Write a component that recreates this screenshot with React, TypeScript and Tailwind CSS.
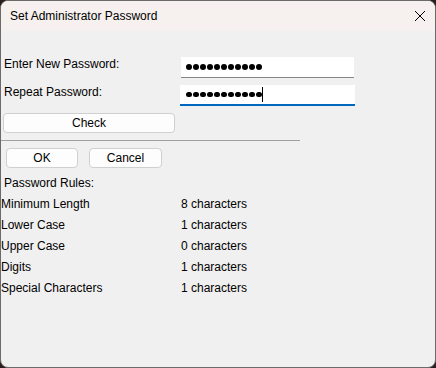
import React from "react";

function Dots({ n }: { n: number }) {
  return (
    <div className="flex items-center gap-[1.5px]">
      {Array.from({ length: n }).map((_, i) => (
        <span key={i} className="block w-[5.5px] h-[5.5px] rounded-full bg-black" />
      ))}
    </div>
  );
}

const rules: [string, string][] = [
  ["Minimum Length", "8 characters"],
  ["Lower Case", "1 characters"],
  ["Upper Case", "0 characters"],
  ["Digits", "1 characters"],
  ["Special Characters", "1 characters"],
];

export default function App() {
  return (
    <div
      className="w-[436px] h-[368px] bg-[#2a1f1c] text-black text-[12px]"
      style={{ fontFamily: '"Liberation Sans", Arial, sans-serif' }}
    >
      <div className="w-full h-full rounded-[8px] overflow-hidden border border-[#6b6b6b] bg-[#f0f0f0] flex flex-col">
        <div className="h-[30px] bg-[#f6f1ef] flex items-center justify-between pl-[9px] pr-[9px] shrink-0">
          <span className="text-[12px] leading-[14px]">Set Administrator Password</span>
          <svg width="12" height="12" viewBox="0 0 12 12">
            <path d="M1 1 L11 11 M11 1 L1 11" stroke="#000" strokeWidth="1" fill="none" />
          </svg>
        </div>
        <div className="flex flex-col pt-[26px]">
          <div className="flex h-[21px]">
            <div className="w-[180px] pl-[3px] leading-[14px]">Enter New Password:</div>
            <div className="w-[173px] h-[21px] bg-white border-b border-[#868686] flex items-center pl-[5px]">
              <Dots n={11} />
            </div>
          </div>
          <div className="flex h-[21px] mt-[7px]">
            <div className="w-[179px] pl-[3px] leading-[14px]">Repeat Password:</div>
            <div className="w-[175px] h-[21px] bg-white border-b-2 border-[#0067c0] flex items-center pl-[6px]">
              <Dots n={11} />
              <span className="block w-[1px] h-[15px] bg-black" />
            </div>
          </div>
          <div className="mt-[7px] ml-[2px] w-[172px] h-[20px] bg-[#fdfdfd] border border-[#d0d0d0] rounded-[4px] flex items-center justify-center">
            Check
          </div>
          <div className="mt-[7px] w-[299px] border-t border-[#a0a0a0]" />
          <div className="mt-[7px] flex h-[20px]">
            <div className="ml-[5px] w-[72px] h-[20px] bg-[#fdfdfd] border border-[#d0d0d0] rounded-[4px] flex items-center justify-center">
              OK
            </div>
            <div className="ml-[11px] w-[73px] h-[20px] bg-[#fdfdfd] border border-[#d0d0d0] rounded-[4px] flex items-center justify-center">
              Cancel
            </div>
          </div>
          <div className="mt-[7px] pl-[3px] h-[16px] leading-[16px]">Password Rules:</div>
          <div className="mt-[2px] flex flex-col">
            {rules.map(([k, v]) => (
              <div key={k} className="flex h-[21px] items-center">
                <div className="w-[180px]">{k}</div>
                <div>{v}</div>
              </div>
            ))}
          </div>
        </div>
      </div>
    </div>
  );
}
